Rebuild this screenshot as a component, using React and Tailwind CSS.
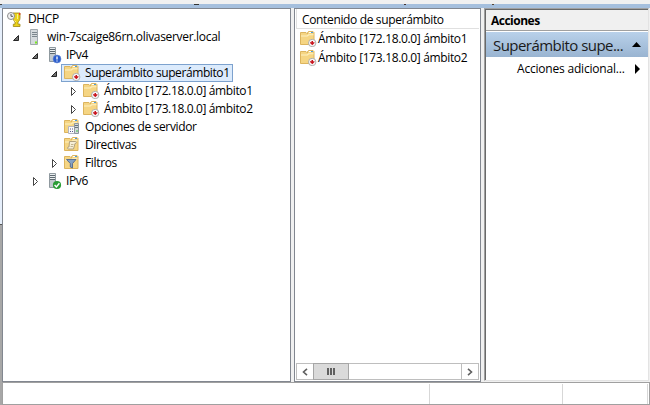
import React from 'react';

function Folder({ kind = 'scope' }) {
  return (
    <svg width="17" height="16" viewBox="0 0 17 16" className="block shrink-0">
      <path d="M.5 1.500h5.500l1.500 1.500V1.500l1-1h4.500l1 1v12H.5z" fill="#f5d583" stroke="#dcb45e" />
      <path d="M1 4.500h6l1.500-1.300h5v1H9L7.500 5.500H1z" fill="#fdf1c4" />
      <path d="M9 1.500h2" stroke="#fff" />
      <path d="M11 1.500h2" stroke="#4a9bd8" />
      {kind === 'scope' && (
        <>
          <circle cx="12.200" cy="12" r="3.700" fill="#f8f8f8" stroke="#a0a0a0" strokeWidth=".8" />
          <path d="M11.500 10h1.500v1.300h1.500v.8l-2.200 2.200-2.300-2.200v-.8h1.500z" fill="#c8141e" />
        </>
      )}
      {kind === 'options' && (
        <>
          <path d="M4.500 7.500h6v7h-6z" fill="#fafafa" stroke="#b4b4c0" />
          <path d="M6 10h1m1 0h1M6 12.500h1m1 0h1" stroke="#55588a" />
          <path d="M10.500 4.500h4v10h-4z" fill="#d3d8dc" stroke="#8d979f" />
          <path d="M11 6.500h3M11 8.500h3" stroke="#68747e" />
          <path d="M12.500 12h1" stroke="#3fc13f" strokeWidth="2" />
        </>
      )}
      {kind === 'policy' && (
        <>
          <path d="M5.500 4.500h6c1 0 1 2 0 2h-.5l-1.500 5.500h-5c-1.300 0-1.300-2 0-2h.5z" fill="#f6eed6" stroke="#a99a78" strokeWidth=".9" />
          <path d="M7 7.500h2.500M6.500 9.500h2.500" stroke="#b5a67f" strokeWidth=".8" />
        </>
      )}
      {kind === 'filter' && (
        <path d="M2.500 4.500h9.500L8.500 8.500V13l-2.200-1V8.500z" fill="#86a2c4" stroke="#53688a" strokeWidth=".9" />
      )}
    </svg>
  );
}

function Server({ badge }) {
  return (
    <svg width="17" height="17" viewBox="0 0 17 17" className="block shrink-0">
      {!badge && (
        <>
          <path d="M4.500.5h7v15h-7z" fill="#d5dadd" stroke="#a0a8ae" />
          <path d="M6 3.500h5M6 5.500h5M6 7.500h5" stroke="#7b868d" />
          <path d="M9 13.500h2" stroke="#7be81e" strokeWidth="2" />
        </>
      )}
      {badge && (
        <>
          <path d="M4.500.5h6v14h-6z" fill="#c2c9ce" stroke="#8f999f" />
          <path d="M5 2.500h5M5 4.500h5M5 6.500h5" stroke="#5e6970" />
          <path d="M5 1.500h5M5 3.500h5M5 5.500h5" stroke="#e9edef" />
        </>
      )}
      {badge === 'info' && (
        <>
          <circle cx="12" cy="12" r="4" fill="#2a5ccb" stroke="#6f91d7" strokeWidth=".6" />
          <path d="M12 9.500v3m0 1v1" stroke="#fff" strokeWidth="1.300" />
        </>
      )}
      {badge === 'ok' && (
        <>
          <circle cx="12" cy="12" r="4.100" fill="#2a9d35" />
          <path d="M9.600 12l1.800 2 3-3.700" stroke="#fff" strokeWidth="1.400" fill="none" />
        </>
      )}
    </svg>
  );
}

function Trophy() {
  return (
    <svg width="16" height="17" viewBox="0 0 16 17" className="block shrink-0">
      <path d="M6 2h7v5c0 2.500-2 4-2 4v2.200h2v2.300H6.300v-2.300H8V11S6 9 6 7z" fill="#ead21a" stroke="#9c8412" strokeWidth=".8" />
      <path d="M7.500 9.500L9 11M10.500 3v5" stroke="#fbf08a" />
      <circle cx="4" cy="5" r="3.500" fill="#f2f2f2" stroke="#8c8c8c" />
      <path d="M4 3v2.300h2" stroke="#555" fill="none" />
      <path d="M12 3h1.300" stroke="#e33" strokeWidth="2" />
    </svg>
  );
}

function Expander({ state }) {
  return (
    <svg width="8" height="12" viewBox="0 0 8 12" className="block shrink-0">
      {state === 'open' && <path d="M6.500 4.500v5h-5z" fill="#707070" stroke="#262626" />}
      {state === 'closed' && <path d="M2.500 2.500v8L6.500 6.500z" fill="#fff" stroke="#444" />}
    </svg>
  );
}

function Row({ pad, state, icon, children, label = 'tracking-[-0.35px]', selected }) {
  return (
    <div className={`flex h-[18px] items-center ${pad}`}>
      <Expander state={state} />
      <div
        className={`ml-[3px] flex h-[18px] items-center border pl-[2px] ${
          selected ? 'border-[#7da2ce] bg-[#dcebfc] pr-[2px]' : 'border-transparent'
        }`}
      >
        <div className="w-[17px]">{icon}</div>
        <span className={`ml-[4px] leading-[16px] ${label}`}>{children}</span>
      </div>
    </div>
  );
}

function ListItem({ children }) {
  return (
    <div className="flex h-[19px] items-center pl-[5px]">
      <Folder />
      <span className="ml-[1px] tracking-[-0.35px]">{children}</span>
    </div>
  );
}

export default function App() {
  return (
    <div className="flex h-[405px] w-[650px] flex-col overflow-hidden whitespace-nowrap bg-[#f0f0f0] font-['Open_Sans','Noto_Sans',sans-serif] text-[12px] leading-[18px] text-black">
      <div className="h-[4px] shrink-0 bg-[#f0f0f0]" />
      <div className="flex h-[4px] shrink-0 items-start bg-[#a5bfdd]">
        <div className="h-px w-[2px] bg-[#444]" />
        <div className="ml-[192px] h-px w-[5px] bg-[#333]" />
        <div className="ml-[205px] h-px w-[2px] bg-[#433]" />
        <div className="ml-[86px] h-px w-[2px] bg-[#543]" />
      </div>
      <div className="flex h-[374px] shrink-0">
        <div className="flex w-[2px] flex-col">
          <div className="h-[216px] bg-[#e6effb]" />
          <div className="h-px bg-[#555]" />
          <div className="grow bg-[#a7a7a7]" />
        </div>
        <div className="w-[289px] border border-[#828790] bg-white pt-[1px]">
          <div className="flex h-[18px] items-center pl-[4px]">
            <Trophy />
            <span className="ml-[5px] tracking-[-0.35px]">DHCP</span>
          </div>
          <Row pad="pl-[9px]" state="open" icon={<Server />} label="tracking-[-0.32px]">win-7scaige86rn.olivaserver.local</Row>
          <Row pad="pl-[28px]" state="open" icon={<Server badge="info" />}>IPv4</Row>
          <Row pad="pl-[47px]" state="open" icon={<Folder />} label="tracking-[-0.4px]" selected>Superámbito superámbito1</Row>
          <Row pad="pl-[66px]" state="closed" icon={<Folder />} label="tracking-[-0.37px]">Ámbito [172.18.0.0] ámbito1</Row>
          <Row pad="pl-[66px]" state="closed" icon={<Folder />} label="tracking-[-0.37px]">Ámbito [173.18.0.0] ámbito2</Row>
          <Row pad="pl-[47px]" icon={<Folder kind="options" />}>Opciones de servidor</Row>
          <Row pad="pl-[47px]" icon={<Folder kind="policy" />}>Directivas</Row>
          <Row pad="pl-[47px]" state="closed" icon={<Folder kind="filter" />}>Filtros</Row>
          <Row pad="pl-[28px]" state="closed" icon={<Server badge="ok" />}>IPv6</Row>
        </div>
        <div className="ml-[3px] flex w-[187px] flex-col border border-[#828790] bg-white">
          <div className="mx-px h-[20px] border-b border-l border-[#e0e0e0] pl-[5px] pt-[2px] tracking-[-0.35px]">Contenido de superámbito</div>
          <ListItem>Ámbito [172.18.0.0] ámbito1</ListItem>
          <ListItem>Ámbito [173.18.0.0] ámbito2</ListItem>
          <div className="mx-px mb-px mt-auto flex h-[17px] border border-[#bebebe]">
            <div className="flex w-[16px] items-center justify-center">
              <svg width="6" height="8" viewBox="0 0 6 8"><path d="M5 .8L1.500 4 5 7.200" fill="none" stroke="#606060" strokeWidth="1.600" /></svg>
            </div>
            <div className="-my-px flex w-[36px] items-center justify-center gap-px border border-[#a6a6a6] bg-[#dadada]">
              <div className="h-[7px] w-[2px] bg-[#606060]" />
              <div className="h-[7px] w-[2px] bg-[#606060]" />
              <div className="h-[7px] w-[2px] bg-[#606060]" />
            </div>
            <div className="ml-auto flex w-[17px] items-center justify-center border-l border-[#bebebe]">
              <svg width="6" height="8" viewBox="0 0 6 8"><path d="M1 .8L4.500 4 1 7.200" fill="none" stroke="#606060" strokeWidth="1.600" /></svg>
            </div>
          </div>
        </div>
        <div className="ml-[3px] h-[373px] w-[165px] border-b border-l border-r border-t border-b-[#e3e3e3] border-l-[#a0a0a0] border-r-[#e3e3e3] border-t-[#a0a0a0] bg-white">
          <div className="h-full border-l border-t border-[#696969]">
            <div className="h-[21px] border-b border-[#a0a0a0] bg-[#f0f0f0] pl-[5px] pt-[2px] font-bold tracking-[-0.5px]">Acciones</div>
            <div className="mt-px flex h-[25px] items-center bg-gradient-to-b from-[#b9d1ea] to-[#99b4d1] pl-[7px] pr-[7px]">
              <span className="text-[15px] tracking-[-0.54px] text-[#1a1a1a]">Superámbito supe...</span>
              <svg width="9" height="5" viewBox="0 0 9 5" className="ml-auto"><path d="M0 5L4.500 0 9 5z" /></svg>
            </div>
            <div className="flex h-[24px] items-center pl-[31px] pr-[8px]">
              <span className="tracking-[-0.2px]">Acciones adicional...</span>
              <svg width="5" height="10" viewBox="0 0 5 10" className="ml-auto"><path d="M0 0L5 5 0 10z" /></svg>
            </div>
          </div>
        </div>
      </div>
      <div className="flex h-[23px] shrink-0">
        <div className="w-[2px] bg-[#a7a7a7]" />
        <div className="flex grow border border-[#a0a0a0] bg-white pt-px">
          <div className="w-[427px] border-r border-[#d7d7d7]" />
          <div className="w-[133px] border-r border-[#d7d7d7]" />
          <div className="w-[85px] border-r border-[#d7d7d7]" />
        </div>
      </div>
    </div>
  );
}
